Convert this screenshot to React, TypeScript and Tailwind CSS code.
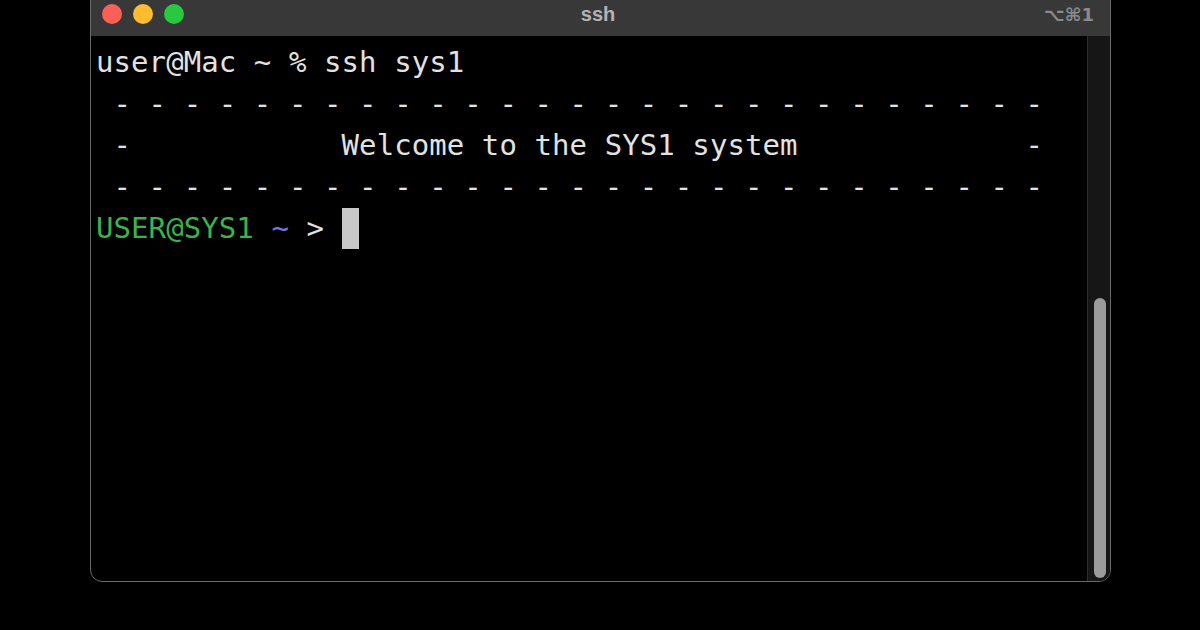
const dashes = ' ' + '- '.repeat(26) + '-';
const welcome = ' -' + ' '.repeat(12) + 'Welcome to the SYS1 system' + ' '.repeat(13) + '-';

export default function App() {
  return (
    <div className="h-[630px] w-[1200px] overflow-hidden bg-black">
      <div className="-mt-[12px] ml-[90px] flex h-[594px] w-[1021px] flex-col overflow-hidden rounded-[12px] border border-[#6a6a6a] bg-black">
        <div className="h-[47px] shrink-0 bg-[#383838] pt-[12px]">
          <div className="flex h-[26px] items-center justify-between pl-[11px] pr-[16px]">
            <div className="flex w-[200px] items-center gap-[11px]">
              <span className="h-[20px] w-[20px] rounded-full bg-[#fe5f57]" />
              <span className="h-[20px] w-[20px] rounded-full bg-[#febc2e]" />
              <span className="h-[20px] w-[20px] rounded-full bg-[#28c840]" />
            </div>
            <div className="font-['Liberation_Sans',sans-serif] text-[20px] font-bold text-[#b3b3b3]">ssh</div>
            <div className="w-[200px] text-right font-['DejaVu_Sans',sans-serif] text-[18px] font-bold text-[#8a8a8a]">
              ⌥⌘1
            </div>
          </div>
        </div>
        <div className="flex min-h-0 flex-1">
          <div className="flex-1 whitespace-pre pl-[5px] pt-[6px] font-['DejaVu_Sans_Mono',monospace] text-[29px] leading-[41.5px] tracking-[0.08px] text-[#e2e2e2]">
            <div>user@Mac ~ % ssh sys1</div>
            <div>{dashes}</div>
            <div>{welcome}</div>
            <div>{dashes}</div>
            <div>
              <span className="text-[#3cb44a]">USER@SYS1</span> <span className="text-[#7676e0]">~</span> &gt;{' '}
              <span className="inline-block h-[41px] w-[17px] bg-[#c8c8c8] align-top" />
            </div>
          </div>
          <div className="flex w-[23px] shrink-0 flex-col justify-end border-l border-[#2c2c2c] bg-[#161616] pb-[3px] pl-[6px]">
            <div className="h-[280px] w-[12px] rounded-full bg-[#9b9b9b]" />
          </div>
        </div>
      </div>
    </div>
  );
}
